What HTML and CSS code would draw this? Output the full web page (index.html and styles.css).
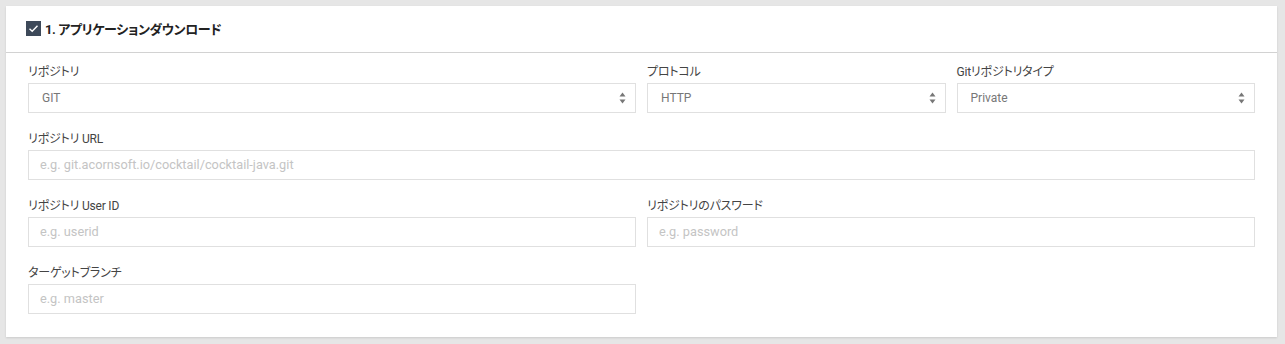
FILE: index.html
```html
<!DOCTYPE html>
<html lang="ja">
<head>
    <meta charset="UTF-8">
    <meta name="viewport" content="width=device-width, initial-scale=1.0">
    <title>アプリケーションダウンロード</title>
    <link rel="stylesheet" href="styles.css">
</head>
<body>
    <div class="card">
        <div class="card-head">
            <span class="check">
                <svg width="15" height="15" viewBox="0 0 15 15"><path d="M3.5 7.8 L6.2 10.3 L11.5 4.8" fill="none" stroke="#fff" stroke-width="1.4"/></svg>
            </span>
            <h3 class="title">1. アプリケーションダウンロード</h3>
        </div>
        <div class="card-body">
            <div class="form-grid">
                <div class="field span2">
                    <label>リポジトリ</label>
                    <div class="select">
                        <select><option>GIT</option></select>
                        <svg class="arrows" width="7" height="12" viewBox="0 0 7 12"><path d="M3.5 0.5 L6.5 4.5 L0.5 4.5 Z M0.5 7.5 L6.5 7.5 L3.5 11.5 Z" fill="#777"/></svg>
                    </div>
                </div>
                <div class="field">
                    <label>プロトコル</label>
                    <div class="select">
                        <select><option>HTTP</option></select>
                        <svg class="arrows" width="7" height="12" viewBox="0 0 7 12"><path d="M3.5 0.5 L6.5 4.5 L0.5 4.5 Z M0.5 7.5 L6.5 7.5 L3.5 11.5 Z" fill="#777"/></svg>
                    </div>
                </div>
                <div class="field">
                    <label>Gitリポジトリタイプ</label>
                    <div class="select">
                        <select><option>Private</option></select>
                        <svg class="arrows" width="7" height="12" viewBox="0 0 7 12"><path d="M3.5 0.5 L6.5 4.5 L0.5 4.5 Z M0.5 7.5 L6.5 7.5 L3.5 11.5 Z" fill="#777"/></svg>
                    </div>
                </div>

                <div class="field span4">
                    <label>リポジトリ URL</label>
                    <input type="text" placeholder="e.g. git.acornsoft.io/cocktail/cocktail-java.git">
                </div>

                <div class="field span2">
                    <label>リポジトリ User ID</label>
                    <input type="text" placeholder="e.g. userid">
                </div>
                <div class="field span2">
                    <label>リポジトリのパスワード</label>
                    <input type="password" placeholder="e.g. password">
                </div>

                <div class="field span2">
                    <label>ターゲットブランチ</label>
                    <input type="text" placeholder="e.g. master">
                </div>
            </div>
        </div>
    </div>
</body>
</html>
```

FILE: styles.css
```css
body{
    margin:0;
    padding:6px 8px 7px 6px;
    background:#e6e6e6;
    font-family:Roboto, "Noto Sans CJK JP", sans-serif;
    font-feature-settings:"palt";
    color:#333;
}
.card{
    background:#fff;
    box-shadow:0 1px 2px rgba(0,0,0,0.12);
}
.card-head{
    display:flex;
    align-items:center;
    height:44px;
    padding:0 0 2px 20px;
    border-bottom:1px solid #d2d2d2;
}
.check{
    display:flex;
    width:15px;
    height:15px;
    background:#3d4959;
    margin-right:4px;
}
.title{
    margin:0;
    font-size:13px;
    font-weight:700;
    letter-spacing:-0.4px;
    color:#222;
}
.card-body{
    padding:10px 22px 23px;
}
.form-grid{
    display:grid;
    grid-template-columns:repeat(4, 1fr);
    column-gap:11px;
    row-gap:17px;
}
.field{
    display:flex;
    flex-direction:column;
}
.span2{
    grid-column:span 2;
}
.span4{
    grid-column:span 4;
}
.field label{
    font-size:12px;
    line-height:18px;
    margin-bottom:2px;
    letter-spacing:-0.2px;
    color:#444;
}
.field input,
.select select{
    box-sizing:border-box;
    width:100%;
    height:30px;
    border:1px solid #e0e0e0;
    border-radius:0;
    outline:0;
    background:#fff;
    padding:0 12px;
    font-family:Roboto, "Noto Sans CJK JP", sans-serif;
    font-size:12px;
    color:#777;
}
.field input::placeholder{
    color:#c4c4c4;
    font-size:12.75px;
}
.field input{
    padding-left:11px;
}
.select{
    position:relative;
}
.select select{
    appearance:none;
    -webkit-appearance:none;
    padding-left:13px;
}
.arrows{
    position:absolute;
    right:10px;
    top:9px;
    pointer-events:none;
}
```
